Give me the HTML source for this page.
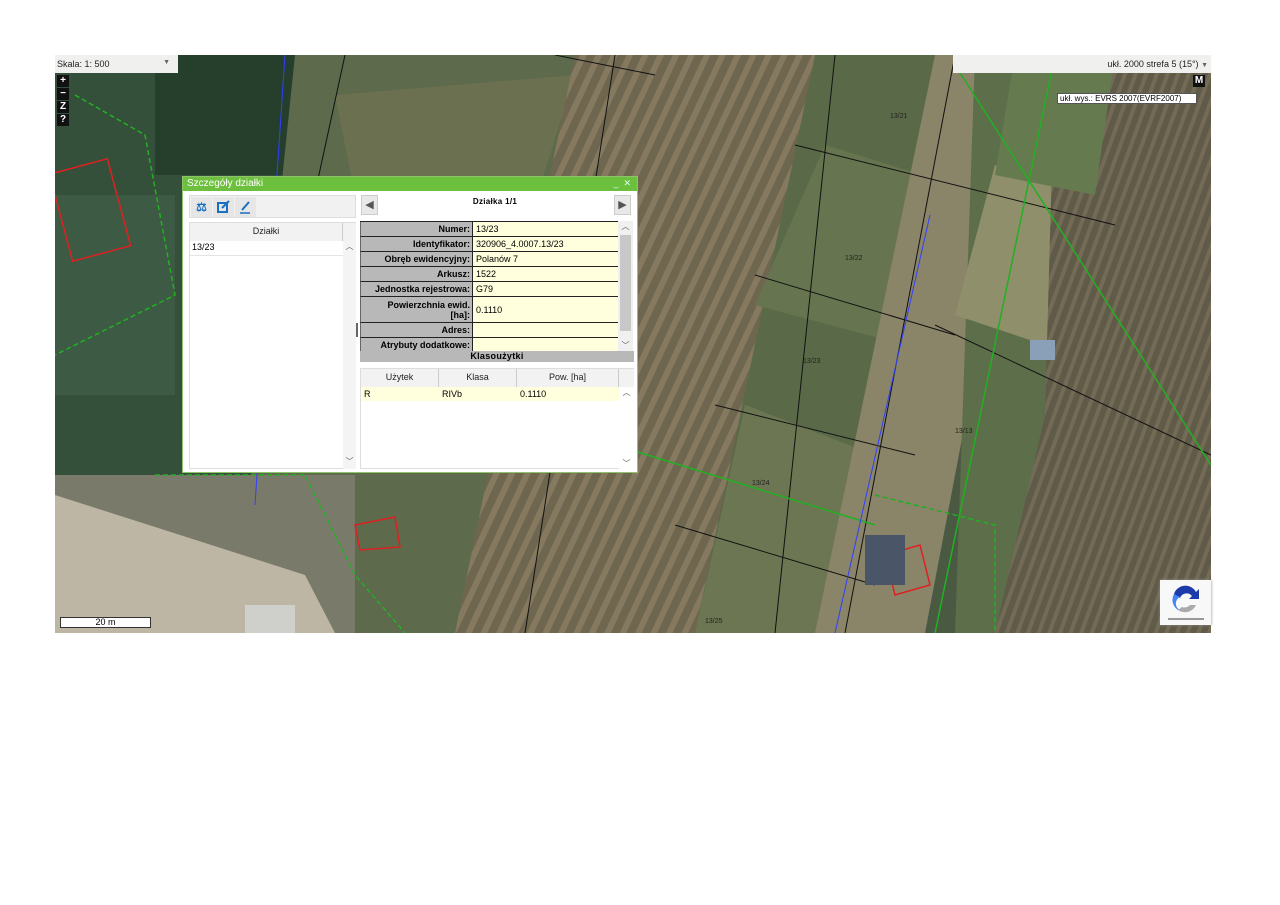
<!DOCTYPE html>
<html><head><meta charset="utf-8">
<style>
*{box-sizing:border-box;margin:0;padding:0}
body{width:1280px;height:905px;background:#fff;position:relative;overflow:hidden;font-family:"Liberation Sans",sans-serif;font-size:9px;color:#000}
.abs{position:absolute}
#map{left:55px;top:55px;width:1156px;height:578px}
.ctl{background:#111;color:#fff;width:12px;height:12px;font-size:10px;font-weight:bold;text-align:center;line-height:12px;left:57px}
#dlg{left:182px;top:176px;width:456px;height:297px;background:#fff;border:1px solid #8fc46a}
#tb{left:0;top:0;width:454px;height:14px;background:#6dbf3e;color:#fff;font-size:10px;padding-left:4px;line-height:13px}
.lbl{background:#b8b8b8;font-weight:bold;text-align:right;padding-right:2px;border-bottom:1px solid #222;border-left:1px solid #666}
.val{background:#ffffdd;padding-left:3px;border-bottom:1px solid #222;border-left:1px solid #222}
.row{position:absolute;left:0;width:258px;display:flex}
.row div{display:flex;align-items:center;justify-content:flex-end;height:100%}
.row .val{justify-content:flex-start}
.hdr{background:#f2f2f2;border-right:1px solid #ccc;text-align:center;line-height:17px;color:#222}
</style></head><body>
<svg id="map" class="abs" viewBox="0 0 1156 578" width="1156" height="578">
<defs>
<pattern id="str" width="14" height="14" patternUnits="userSpaceOnUse" patternTransform="rotate(25)">
<rect width="14" height="14" fill="#6f6650"/><rect width="6" height="14" fill="#857a60"/></pattern>
<pattern id="str2" width="10" height="10" patternUnits="userSpaceOnUse" patternTransform="rotate(20)">
<rect width="10" height="10" fill="#605a48"/><rect width="4" height="10" fill="#736b55"/></pattern>
</defs>
<rect width="1156" height="578" fill="#4a5a42"/>
<rect x="0" y="0" width="260" height="578" fill="#34503a"/>
<rect x="100" y="0" width="190" height="120" fill="#253f2c"/>
<rect x="0" y="140" width="120" height="200" fill="#3d5a44"/>
<polygon points="240,0 560,0 470,578 180,578" fill="#5e6a4c"/>
<polygon points="280,40 520,20 470,180 300,140" fill="#6b7050"/>
<polygon points="520,0 780,0 720,578 400,578" fill="url(#str)"/>
<polygon points="760,0 930,0 840,578 640,578" fill="#5a6a48"/>
<polygon points="770,90 900,130 850,290 700,250" fill="#66754f"/>
<polygon points="690,350 820,400 780,578 640,578" fill="#6c7652"/>
<polygon points="880,0 980,0 870,578 760,578" fill="#8a8468"/>
<polygon points="920,0 1156,0 1156,578 900,578" fill="#5d6e4a"/>
<polygon points="940,110 1060,150 1020,300 900,260" fill="#8f8f6c"/>
<polygon points="1000,0 1156,0 1156,578 940,578 990,360" fill="url(#str2)"/>
<polygon points="960,0 1060,0 1040,140 940,120" fill="#667a50"/>
<rect x="0" y="420" width="300" height="158" fill="#7a7a6a"/>
<polygon points="0,440 250,520 280,578 0,578" fill="#bdb6a4"/>
<rect x="190" y="550" width="50" height="28" fill="#cfd0cc"/>
<g stroke="#111" stroke-width="1" fill="none">
<line x1="290" y1="0" x2="240" y2="230"/><line x1="560" y1="0" x2="470" y2="578"/>
<line x1="780" y1="0" x2="720" y2="578"/><line x1="740" y1="90" x2="1060" y2="170"/>
<line x1="700" y1="220" x2="900" y2="280"/><line x1="660" y1="350" x2="860" y2="400"/>
<line x1="620" y1="470" x2="820" y2="530"/><line x1="880" y1="270" x2="1156" y2="400"/>
<line x1="500" y1="0" x2="600" y2="20"/><line x1="900" y1="0" x2="790" y2="578"/>
</g>
<g stroke="#22b022" stroke-width="1.5" fill="none">
<line x1="900" y1="10" x2="1156" y2="410"/><line x1="1000" y1="0" x2="880" y2="578"/>
<line x1="560" y1="390" x2="820" y2="470"/>
<polyline points="20,40 90,80 120,240 0,300" stroke-dasharray="5,3"/>
<polyline points="820,440 940,470 940,578" stroke-dasharray="5,3"/>
<polyline points="100,420 250,420 300,520 350,578" stroke-dasharray="5,3"/>
</g>
<g stroke="#3040ff" stroke-width="1"><line x1="875" y1="160" x2="780" y2="578"/><line x1="230" y1="0" x2="200" y2="450"/></g>
<g stroke="#e02020" stroke-width="1.5" fill="none">
<rect x="5" y="110" width="60" height="90" transform="rotate(-15 35 155)"/>
<polygon points="300,470 340,462 345,492 305,495"/>
<polygon points="830,500 865,490 875,530 840,540"/>
</g>
<rect x="975" y="285" width="25" height="20" fill="#8aa0b8"/>
<rect x="810" y="480" width="40" height="50" fill="#4a5568"/>
<g font-size="7" fill="#222" font-family="Liberation Sans"><text x="835" y="63">13/21</text><text x="790" y="205">13/22</text><text x="748" y="308">13/23</text><text x="900" y="378">13/13</text><text x="697" y="430">13/24</text><text x="650" y="568">13/25</text></g>
</svg>
<div class="abs" style="left:55px;top:55px;width:123px;height:18px;background:#f0f0ee;font-size:9px;padding:4px 2px;color:#222">Skala: 1: 500<span style="position:absolute;right:8px;color:#666;font-size:7px">▼</span></div>
<div class="abs ctl" style="top:75px">+</div>
<div class="abs ctl" style="top:88px">−</div>
<div class="abs ctl" style="top:101px">Z</div>
<div class="abs ctl" style="top:114px">?</div>
<div class="abs" style="left:953px;top:55px;width:258px;height:18px;background:#f0f0ee;font-size:9px;text-align:right;padding:4px 3px;color:#222">ukł. 2000 strefa 5 (15°) <span style="color:#666;font-size:7px">▼</span></div>
<div class="abs ctl" style="left:1193px;top:75px">M</div>
<div class="abs" style="left:1057px;top:93px;width:140px;height:11px;background:#fff;border:1px solid #555;font-size:8px;line-height:9px;padding-left:2px">ukł. wys.: EVRS 2007(EVRF2007)</div>
<div class="abs" style="left:60px;top:617px;width:91px;height:11px;background:#fff;border:1px solid #333;font-size:9px;text-align:center;line-height:9px">20 m</div>
<div class="abs" style="left:1160px;top:580px;width:51px;height:45px;background:#f8f8f8;box-shadow:0 0 3px #888">
<svg width="51" height="45" viewBox="0 0 51 45"><path d="M14,14 a12,12 0 0 1 22,-2 l3,-3 l0,10 l-10,0 l3,-3 a7,7 0 0 0 -12,2z" fill="#1c3aa9"/><path d="M14,14 a12,12 0 0 0 4,16 l8,0 a7,7 0 0 1 -6,-13z" fill="#4285f4"/><path d="M18,30 a12,12 0 0 0 18,-5 l-6,0 a7,7 0 0 1 -8,2z" fill="#aaa"/><rect x="8" y="38" width="36" height="2" fill="#999"/></svg></div>

<div id="dlg" class="abs">
<div id="tb" class="abs">Szczegóły działki<span style="position:absolute;right:6px;color:#dfe;font-size:9px">_&nbsp;&nbsp;✕</span></div>
<div class="abs" style="left:6px;top:18px;width:167px;height:23px;background:#f1f1f1;border:1px solid #ddd">
<div class="abs" style="left:1px;top:1px;width:21px;height:20px;background:#e6e6e6;color:#1a6fc0;font-size:12px;text-align:center;line-height:20px;font-weight:bold">&#x2696;</div>
<div class="abs" style="left:23px;top:1px;width:21px;height:20px;background:#e6e6e6"><svg width="21" height="20"><rect x="5" y="6" width="9" height="9" fill="none" stroke="#1a6fc0" stroke-width="2"/><line x1="9" y1="11" x2="16" y2="4" stroke="#1a6fc0" stroke-width="2"/></svg></div>
<div class="abs" style="left:45px;top:1px;width:21px;height:20px;background:#e6e6e6"><svg width="21" height="20"><line x1="7" y1="13" x2="14" y2="5" stroke="#1a6fc0" stroke-width="2"/><line x1="5" y1="16" x2="15" y2="16" stroke="#1a6fc0" stroke-width="1.5"/></svg></div>
</div>
<div class="abs" style="left:6px;top:45px;width:167px;height:247px;background:#fff;border:1px solid #ddd">
<div class="abs hdr" style="left:0;top:0;width:153px;height:18px">Działki</div>
<div class="abs" style="left:153px;top:0;width:13px;height:18px;background:#f2f2f2"></div>
<div class="abs" style="left:2px;top:19px;font-size:9px">13/23</div>
<div class="abs" style="left:0;top:32px;width:153px;border-top:1px solid #e4e4e4"></div>
<div class="abs" style="left:153px;top:18px;width:13px;height:228px;background:#f4f4f4;font-size:8px;color:#555;text-align:center">︿<div style="position:absolute;bottom:2px;width:13px">﹀</div></div>
</div>
<div class="abs" style="left:173px;top:146px;width:2px;height:14px;background:#666"></div>
<div class="abs" style="left:178px;top:18px;width:17px;height:20px;background:#e8e8e8;border:1px solid #ccc;color:#555;font-size:11px;text-align:center;line-height:18px">◀</div>
<div class="abs" style="left:195px;top:20px;width:234px;text-align:center;font-weight:bold;font-size:8px;letter-spacing:.3px">Działka 1/1</div>
<div class="abs" style="left:431px;top:18px;width:17px;height:20px;background:#e8e8e8;border:1px solid #ccc;color:#555;font-size:11px;text-align:center;line-height:18px">▶</div>
<div class="abs" style="left:177px;top:44px;width:274px;height:130px;overflow:hidden">
<div class="row" style="top:0;height:16px;border-top:1px solid #222"><div class="lbl" style="width:112px">Numer:</div><div class="val" style="width:146px">13/23</div></div>
<div class="row" style="top:16px;height:15px"><div class="lbl" style="width:112px">Identyfikator:</div><div class="val" style="width:146px">320906_4.0007.13/23</div></div>
<div class="row" style="top:31px;height:15px"><div class="lbl" style="width:112px">Obręb ewidencyjny:</div><div class="val" style="width:146px">Polanów 7</div></div>
<div class="row" style="top:46px;height:15px"><div class="lbl" style="width:112px">Arkusz:</div><div class="val" style="width:146px">1522</div></div>
<div class="row" style="top:61px;height:15px"><div class="lbl" style="width:112px">Jednostka rejestrowa:</div><div class="val" style="width:146px">G79</div></div>
<div class="row" style="top:76px;height:26px"><div class="lbl" style="width:112px;line-height:10px;text-align:right">Powierzchnia ewid.<br>[ha]:</div><div class="val" style="width:146px">0.1110</div></div>
<div class="row" style="top:102px;height:15px"><div class="lbl" style="width:112px">Adres:</div><div class="val" style="width:146px"></div></div>
<div class="row" style="top:117px;height:15px"><div class="lbl" style="width:112px">Atrybuty dodatkowe:</div><div class="val" style="width:146px"></div></div>
<div class="abs" style="left:258px;top:0;width:15px;height:130px;background:#f0f0f0;font-size:8px;color:#555;text-align:center">︿<div style="position:absolute;top:14px;left:2px;width:11px;height:96px;background:#c8c8c8"></div><div style="position:absolute;bottom:0;width:15px">﹀</div></div>
</div>
<div class="abs" style="left:177px;top:174px;width:274px;height:11px;background:#b8b8b8;font-weight:bold;text-align:center;line-height:11px;letter-spacing:.3px">Klasoużytki</div>
<div class="abs" style="left:177px;top:191px;width:274px;height:101px;border:1px solid #ddd;background:#fff">
<div class="abs hdr" style="left:0;top:0;width:78px;height:18px">Użytek</div>
<div class="abs hdr" style="left:78px;top:0;width:78px;height:18px">Klasa</div>
<div class="abs hdr" style="left:156px;top:0;width:102px;height:18px">Pow. [ha]</div>
<div class="abs" style="left:258px;top:0;width:15px;height:18px;background:#f2f2f2"></div>
<div class="abs" style="left:0;top:18px;width:258px;height:14px;background:#ffffdd;line-height:14px">
<span class="abs" style="left:3px">R</span><span class="abs" style="left:81px">RIVb</span><span class="abs" style="left:159px">0.1110</span></div>
<div class="abs" style="left:258px;top:18px;width:15px;height:82px;background:#fff;font-size:8px;color:#555;text-align:center">︿<div style="position:absolute;bottom:0;width:15px">﹀</div></div>
</div>
</div>
</body></html>
